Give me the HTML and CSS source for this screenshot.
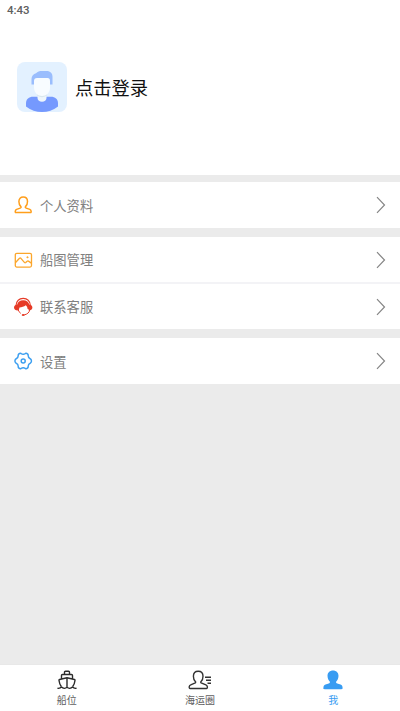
FILE: index.html
```html
<!DOCTYPE html>
<html lang="zh-CN">
<head>
<meta charset="utf-8">
<title>我</title>
<link rel="stylesheet" href="styles.css">
</head>
<body>
<div class="app">
  <header class="status">4:43</header>
  <section class="profile">
    <svg class="avatar" viewBox="0 0 50 50">
      <rect width="50" height="50" rx="8" fill="#e3f1ff"/>
      <path d="M9 44.500V41c0-4 3-6.300 7-6.300h18c4 0 7 2.300 7 6.300v3.500C36 48.200 31 50 25 50S14 48.200 9 44.500z" fill="#7599fe"/>
      <path d="M20.500 31h9v5c0 2.300-2 3.700-4.500 3.700S20.500 38.300 20.500 36z" fill="#eef6fc"/>
      <path d="M20 32h10v1.500q-5 3.500-10 0z" fill="#d9e7ee"/>
      <path d="M14.500 22.500V17c0-3 2-5 4.500-5.800C20.500 9.500 22.500 9 25 9h4.500c4 0 6 2.500 6 6v7.500z" fill="#9abdfd"/>
      <path d="M17 19q0-3 3-3h10.500q2.500 0 2.500 3v6.500c0 5-3.800 8.500-8 8.500s-8-3.500-8-8.500z" fill="#f8fcff"/>
    </svg>
    <span class="login">点击登录</span>
  </section>

  <nav class="group">
    <div class="row">
      <svg class="icon" viewBox="0 0 20 20" fill="none" stroke="#ff9e1b" stroke-width="1.500" stroke-linejoin="round">
        <path d="M7.900 11.600C6.600 10.400 5.900 8.500 5.900 6.400 5.900 3.700 7.600 2 10.200 2s4.300 1.700 4.300 4.400c0 2.100-.7 4-2 5.200-.5.700-.1 1.200.7 1.500l3.600 1.300c1.300.5 2 3.200.6 3.200H3c-1.400 0-.7-2.700.6-3.200l3.600-1.300c.8-.3 1.200-.8.700-1.500z"/>
      </svg>
      <span class="label">个人资料</span>
      <svg class="arrow" viewBox="0 0 10 18"><path d="M1 1.200 8.500 9 1 16.800"/></svg>
    </div>
  </nav>

  <nav class="group">
    <div class="row">
      <svg class="icon" viewBox="0 0 20 20" fill="none" stroke="#fba62c" stroke-width="1.300" stroke-linecap="round" stroke-linejoin="round">
        <rect x="2.300" y="3.300" width="16.200" height="13.800" rx="1.500"/>
        <path d="M2.600 12.500 6.500 8.300q.7-.6 1.400 0l3.700 4.300q.5.500 1.100 0l1.500-1.400q.6-.5 1.200-.1l2.600 1.800"/>
        <circle cx="14.400" cy="7.300" r=".7" fill="#fba62c" stroke-width=".5"/>
      </svg>
      <span class="label">船图管理</span>
      <svg class="arrow" viewBox="0 0 10 18"><path d="M1 1.200 8.500 9 1 16.800"/></svg>
    </div>
    <div class="row">
      <svg class="icon" viewBox="0 0 20 20">
        <path d="M3 8.500C3.500 4 6.300 1.400 10.200 1.400s6.700 2.600 7.200 7.100" fill="none" stroke="#e63b27" stroke-width="1.100"/>
        <path d="M4 8.200C4.500 4.900 7 3.200 10.200 3.200s5.700 1.700 6.200 5l-.5 4.300-1.300-.5c-.2-1.800-.8-3-1.800-3.800-1.900 1.600-4 1.900-6.300 2.300L5.500 14 4 12.500z" fill="#e63b27"/>
        <path d="M4.700 7.500v6C2.700 13.500 1 12.600 1 10.500s1.700-3 3.700-3zM15.700 7.500v6c2 0 3.700-.9 3.700-3s-1.700-3-3.700-3z" fill="#e63b27"/>
        <path d="M5 12.500c.5 1.700 1.500 3 2.800 3.900M16.700 13c-.4 2.500-2.500 4.300-5.500 4.900" fill="none" stroke="#e63b27"/>
        <ellipse cx="10.200" cy="18.100" rx="1.500" ry="1" fill="#e63b27"/>
      </svg>
      <span class="label">联系客服</span>
      <svg class="arrow" viewBox="0 0 10 18"><path d="M1 1.200 8.500 9 1 16.800"/></svg>
    </div>
  </nav>

  <nav class="group">
    <div class="row">
      <svg class="icon" viewBox="0 0 20 20" fill="none" stroke="#3c9ff0" stroke-width="1.500" stroke-linejoin="round">
        <path d="M8 2.500Q10.200 4.100 12.400 2.500 13.400 1.900 14.700 3.100 15.300 3.800 15.200 4.800 15.200 6.900 17.200 7.700 18.300 8.200 18.500 10 18.300 11.800 17.200 12.300 15.200 13.100 15.200 15.200 15.300 16.200 14.700 16.900 13.400 18.100 12.400 17.500 10.200 15.900 8 17.500 7 18.100 5.700 16.900 5.100 16.200 5.200 15.200 5.200 13.100 3.200 12.300 2.100 11.800 1.900 10 2.100 8.200 3.200 7.700 5.200 6.900 5.200 4.800 5.100 3.800 5.700 3.100 7 1.900 8 2.500z"/>
        <circle cx="10.200" cy="10" r="2"/>
      </svg>
      <span class="label">设置</span>
      <svg class="arrow" viewBox="0 0 10 18"><path d="M1 1.200 8.500 9 1 16.800"/></svg>
    </div>
  </nav>

  <footer class="tabs">
    <div class="tab">
      <svg class="tab-icon" viewBox="0 0 24 20" fill="none" stroke="#2b2b2b" stroke-width="1.400" stroke-linecap="round" stroke-linejoin="round">
        <path d="M9.500 4.300V2.200q0-1 1-1h3q1 0 1 1v2.100M6.500 8.300V5.500q0-1 1-1h9q1 0 1 1v2.800M12 8.300v9M6 16C4.800 14.500 4.300 12.500 4 10.500q-.1-.8.600-1L12 7.800l7.400 1.700q.7.200.6 1c-.3 2-.8 4-2 5.500M3 18.300c1.500.2 2.500-.2 3.500-1.200 1.500 1.500 4 1.500 5.500.2 1.500 1.300 4 1.300 5.500-.2 1 1 2 1.400 3.500 1.200"/>
      </svg>
      <span>船位</span>
    </div>
    <div class="tab">
      <svg class="tab-icon" viewBox="0 0 24 20" fill="none" stroke="#333" stroke-width="1.400" stroke-linejoin="round">
        <path d="M7.500 11.700C6.100 10.500 5.400 8.300 5.400 6.200 5.400 3 7.300 1.200 10.200 1.200S15 3 15 6.200c0 2.100-.7 4.300-2.100 5.500-.4.600 0 1.100.8 1.400l4.200 1.700c1.700.7 2 3.700.6 3.700H2.100c-1.400 0-1.200-3 .6-3.700l4-1.700c.8-.3 1.200-.8.800-1.400z"/>
        <path d="M17 7.200H23M18 10.200H23M19.500 13.200H23"/>
      </svg>
      <span>海运圈</span>
    </div>
    <div class="tab active">
      <svg class="tab-icon" viewBox="0 0 24 20" fill="#389cf2">
        <path d="M8.900 11.700C7.500 10.400 6.500 8.400 6.500 5.800 6.500 2.600 8.800.5 12 .5s5.500 2.100 5.500 5.300c0 2.600-1 4.600-2.400 5.900-.2.800.2 1.300 1.200 1.700l3.200 1.200c1.500.6 2.100 1.900 2.100 3.400 0 .8-.4 1.200-1.200 1.200H3.600c-.8 0-1.200-.4-1.200-1.200 0-1.500.6-2.800 2.100-3.400l3.200-1.200c1-.4 1.400-.9 1.200-1.700z"/>
      </svg>
      <span>我</span>
    </div>
  </footer>
</div>
</body>
</html>
```

FILE: styles.css
```css
* { box-sizing: border-box; }
body {
  margin: 0;
  background: #ebebeb;
  font-family: "Noto Sans CJK SC", sans-serif;
}
.app {
  display: flex;
  flex-direction: column;
  height: 711px;
}
.status {
  height: 22px;
  padding-left: 7px;
  background: #fff;
  color: #606060;
  font: 500 11.500px/21px Roboto, sans-serif;
}
.profile {
  display: flex;
  height: 153px;
  padding: 40px 0 0 17px;
  background: #fff;
}
.avatar { width: 50px; height: 50px; }
.login {
  margin-left: 8px;
  color: #111;
  font-size: 18.300px;
  line-height: 50px;
}
.group {
  margin-top: 9px;
  background: #fff;
}
.profile + .group { margin-top: 7px; }
.row {
  display: flex;
  align-items: center;
  height: 46px;
  padding: 0 14px 0 13px;
}
.row + .row {
  height: 47px;
  border-top: 2px solid #f3f3f6;
}
.row:not(:last-child) { height: 45px; }
.icon { width: 20px; height: 20px; }
.label {
  flex: 1;
  margin-left: 7px;
  padding-top: 1px;
  color: #808080;
  font-size: 13.300px;
  line-height: 20px;
}
.arrow {
  width: 10px;
  height: 18px;
  fill: none;
  stroke: #858585;
  stroke-width: 1.200;
}
.tabs {
  display: flex;
  height: 47px;
  margin-top: auto;
  background: #fff;
  border-top: 1px solid #e8e8e8;
}
.tab {
  display: flex;
  flex: 1;
  flex-direction: column;
  align-items: center;
  padding-top: 5px;
  color: #606060;
  font-size: 10px;
  line-height: 19px;
}
.tab-icon { width: 24px; height: 20px; }
.active { color: #389cf2; }
```
